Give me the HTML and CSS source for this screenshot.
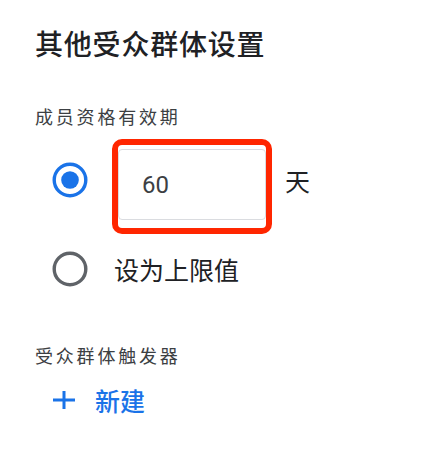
FILE: index.html
```html
<!DOCTYPE html>
<html lang="zh-CN">
<head>
<meta charset="utf-8">
<link rel="stylesheet" href="styles.css">
</head>
<body>
<div class="panel">
  <h1 class="title">其他受众群体设置</h1>
  <div class="label">成员资格有效期</div>
  <div class="option option-days">
    <svg class="radio" width="36" height="36" viewBox="0 0 36 36">
      <circle cx="18" cy="18" r="15.8" fill="none" stroke="#1a73e8" stroke-width="3.4"/>
      <circle cx="18" cy="18" r="8.8" fill="#1a73e8"/>
    </svg>
    <div class="highlight">
      <div class="input">60</div>
    </div>
    <span class="unit">天</span>
  </div>
  <div class="option option-max">
    <svg class="radio" width="36" height="36" viewBox="0 0 36 36">
      <circle cx="18" cy="18" r="15.8" fill="none" stroke="#5f6368" stroke-width="3.4"/>
    </svg>
    <span class="option-text">设为上限值</span>
  </div>
  <div class="label label-trigger">受众群体触发器</div>
  <div class="new-btn">
    <svg class="plus" width="24" height="20" viewBox="0 0 24 20">
      <rect x="1" y="8.5" width="22" height="3" fill="#1a73e8"/>
      <rect x="10.5" y="1" width="3" height="18" fill="#1a73e8"/>
    </svg>
    <span class="new-text">新建</span>
  </div>
</div>
</body>
</html>
```
FILE: styles.css
```css
html, body {
  margin: 0;
  padding: 0;
  background: #ffffff;
}
body {
  font-family: "Noto Sans CJK SC", "Noto Sans", sans-serif;
  color: #202124;
}
.panel {
  padding: 25px 0 0 35px;
  display: flex;
  flex-direction: column;
  align-items: flex-start;
}
.title {
  margin: 0;
  font-size: 28px;
  line-height: 36px;
  font-weight: 500;
  letter-spacing: 0.8px;
  color: #202124;
}
.label {
  margin-top: 43px;
  font-size: 18px;
  line-height: 24px;
  letter-spacing: 2.8px;
  color: #3c4043;
}
.option {
  display: flex;
  align-items: flex-start;
  padding-left: 17px;
}
.option-days {
  margin-top: 11px;
}
.option-days .radio {
  margin-top: 23px;
}
.highlight {
  margin-left: 24px;
  width: 160px;
  height: 95px;
  box-sizing: border-box;
  border: 6px solid #ff2600;
  border-radius: 10px;
  padding-top: 4px;
}
.input {
  width: 148px;
  height: 71px;
  box-sizing: border-box;
  border: 1px solid #dadce0;
  border-radius: 4px;
  padding-left: 23px;
  display: flex;
  align-items: center;
  font-family: "Roboto", "Noto Sans", sans-serif;
  font-size: 24px;
  color: #3c4043;
}
.unit {
  margin-left: 13px;
  margin-top: 26px;
  font-size: 25px;
  line-height: 30px;
  color: #202124;
}
.option-max {
  margin-top: 17px;
  align-items: center;
}
.option-text {
  margin-left: 26px;
  font-size: 25px;
  line-height: 30px;
  color: #202124;
}
.label-trigger {
  margin-top: 56px;
}
.new-btn {
  margin-top: 18px;
  display: flex;
  align-items: center;
  padding-left: 17px;
}
.plus {
  display: block;
}
.new-text {
  margin-left: 19px;
  font-size: 25px;
  line-height: 30px;
  font-weight: 500;
  color: #1a73e8;
}
```
